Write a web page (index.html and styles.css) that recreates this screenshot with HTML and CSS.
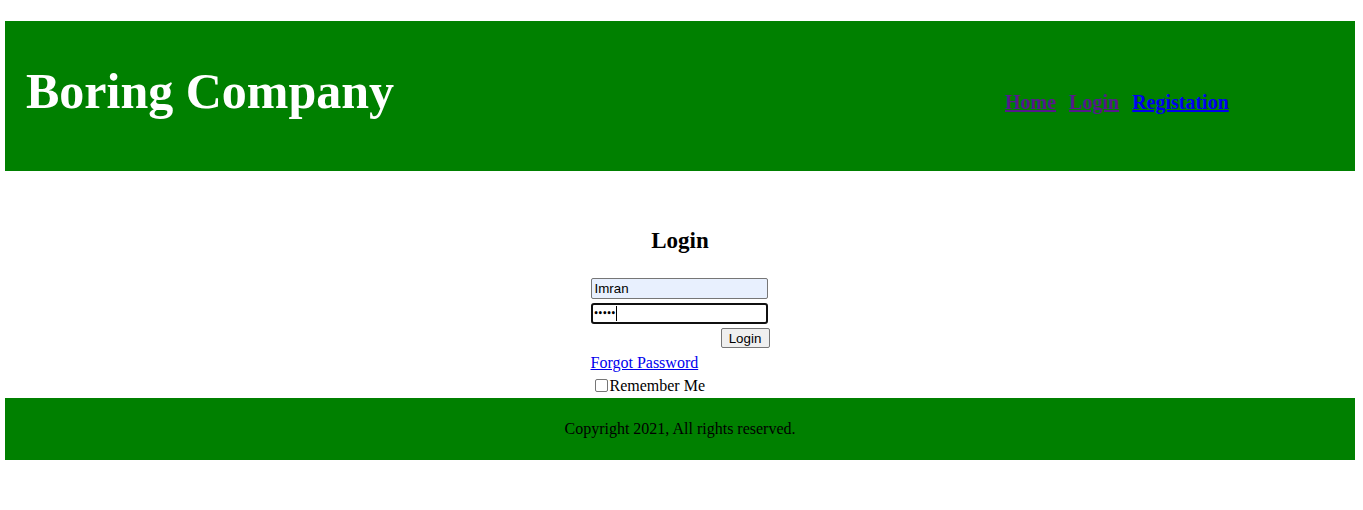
FILE: index.html
```html
<!DOCTYPE html>
<html>
<head>
<meta charset="utf-8">
<link rel="stylesheet" href="styles.css">
</head>
<body>
<div class="page">
  <header class="header">
    <h1 class="brand">Boring Company</h1>
    <nav class="nav">
      <a class="nav-link visited" href="#">Home</a>
      <a class="nav-link visited" href="#">Login</a>
      <a class="nav-link" href="#">Registation</a>
    </nav>
  </header>
  <main class="main">
    <h2 class="form-title">Login</h2>
    <form class="login-form">
      <input class="field autofill" type="text" value="Imran">
      <div class="field focus"><span class="dots">•••••</span><span class="caret"></span></div>
      <div class="btn-row"><button class="btn" type="button">Login</button></div>
      <a class="forgot" href="#">Forgot Password</a>
      <label class="remember"><span class="checkbox"></span>Remember Me</label>
    </form>
  </main>
  <footer class="footer">Copyright 2021, All rights reserved.</footer>
</div>
</body>
</html>
```
FILE: styles.css
```css
html, body {
  margin: 0;
  padding: 0;
  background: #fff;
  font-family: "Liberation Serif", "Times New Roman", serif;
}
.page {
  padding: 21px 8px 0 5px;
}
.header {
  background: #008000;
  height: 150px;
  display: flex;
  align-items: center;
  box-sizing: border-box;
  padding-left: 21px;
}
.brand {
  margin: 0;
  color: #fff;
  font-size: 50px;
  font-weight: bold;
  line-height: 1;
  width: 979px;
  position: relative;
  top: -5px;
}
.nav {
  display: flex;
  gap: 13px;
  position: relative;
  top: 6px;
}
.nav-link {
  font-size: 20px;
  font-weight: bold;
  color: #0000ee;
  text-decoration: underline;
}
.nav-link.visited {
  color: #551a8b;
}
.main {
  display: flex;
  flex-direction: column;
  align-items: center;
  height: 227px;
  box-sizing: border-box;
  padding-top: 57px;
}
.form-title {
  margin: 0 0 24px;
  font-size: 23px;
  line-height: 26px;
  font-weight: bold;
  color: #000;
}
.login-form {
  width: 179px;
  display: flex;
  flex-direction: column;
  align-items: flex-start;
  font-family: "Liberation Sans", Arial, sans-serif;
}
.field {
  width: 177px;
  height: 21px;
  box-sizing: border-box;
  border: 1px solid #767676;
  border-radius: 2px;
  font-family: "Liberation Sans", Arial, sans-serif;
  font-size: 13.33px;
  padding: 1px 3px;
  margin: 0;
  color: #000;
  background: #fff;
  outline: none;
}
.field.autofill {
  background: #e8f0fe;
}
.field.focus {
  margin-top: 4px;
  border: 2px solid #101010;
  border-radius: 3px;
  display: flex;
  align-items: center;
  padding: 0 1px;
}
.dots {
  font-family: "DejaVu Sans", sans-serif;
  font-size: 8px;
  font-weight: bold;
  letter-spacing: -0.8px;
  line-height: 1;
}
.caret {
  display: inline-block;
  width: 1px;
  height: 15px;
  background: #000;
  margin-left: 1px;
}
.btn-row {
  width: 179px;
  display: flex;
  justify-content: flex-end;
  margin-top: 4px;
}
.btn {
  width: 49px;
  height: 20px;
  box-sizing: border-box;
  background: #efefef;
  border: 1px solid #767676;
  border-radius: 2px;
  font-family: "Liberation Sans", Arial, sans-serif;
  font-size: 13.33px;
  padding: 0;
  color: #000;
}
.forgot {
  font-family: "Liberation Serif", "Times New Roman", serif;
  font-size: 16px;
  color: #0000ee;
  text-decoration: underline;
  margin-top: 5px;
  line-height: 19px;
}
.remember {
  font-family: "Liberation Serif", "Times New Roman", serif;
  font-size: 16px;
  color: #000;
  display: flex;
  align-items: center;
  margin-top: 4px;
  line-height: 19px;
}
.checkbox {
  width: 13px;
  height: 13px;
  box-sizing: border-box;
  border: 1px solid #767676;
  border-radius: 2px;
  margin: 0 2px 0 4px;
  background: #fff;
}
.footer {
  background: #008000;
  height: 62px;
  display: flex;
  align-items: center;
  justify-content: center;
  font-size: 16px;
  color: #000;
}
```
